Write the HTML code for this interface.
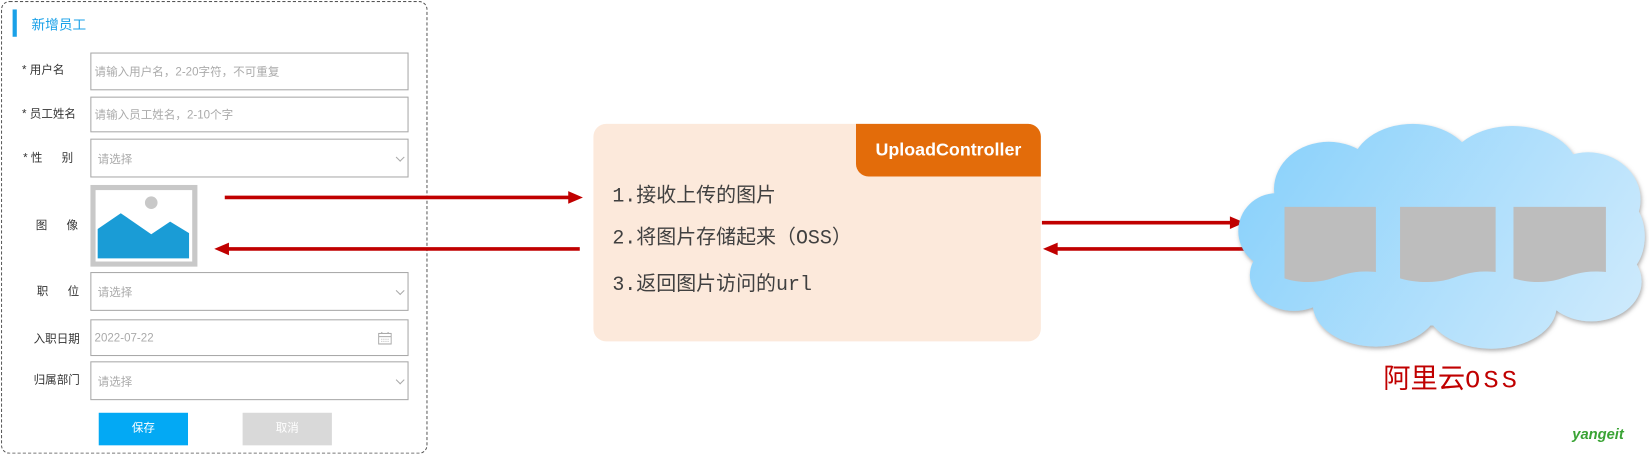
<!DOCTYPE html>
<html><head><meta charset="utf-8"><style>
html,body{margin:0;padding:0;background:#fff;width:1649px;height:456px;overflow:hidden}
#w{position:absolute;left:0;top:0;width:1570px;height:434px;transform:scale(1.0503);transform-origin:0 0;font-family:"Liberation Sans","Noto Sans CJK SC",sans-serif}
.a{position:absolute}
.lbl{position:absolute;font-size:11px;color:#333;line-height:14px}
.in{position:absolute;left:86px;width:303px;border:1px solid #a9a9a9;background:#fff;font-size:11px;color:#aaa;box-sizing:border-box}
.in span{position:absolute;left:3px;top:50%;transform:translateY(-50%)}
.chev{position:absolute;right:4px;top:50%;width:5px;height:5px;border-right:1px solid #aaa;border-bottom:1px solid #aaa;transform:translateY(-70%) rotate(45deg)}
.ln{position:absolute;left:583px;font-size:19px;color:#404040;white-space:nowrap}
.m{font-family:"Liberation Mono",monospace}
</style></head><body><div id="w">
<div class="a" style="left:1px;top:1px;width:404px;height:429px;border:1px dashed #555;border-radius:8px"></div>
<div class="a" style="left:12px;top:9px;width:4px;height:26px;background:#1aa1e8"></div>
<div class="a" style="left:30px;top:13px;font-size:13px;color:#1aa1e8">新增员工</div>

<div class="lbl" style="left:21px;top:60px">* 用户名</div>
<div class="in" style="top:50px;height:36px"><span>请输入用户名，2-20字符，不可重复</span></div>
<div class="lbl" style="left:21px;top:102px">* 员工姓名</div>
<div class="in" style="top:92px;height:34px"><span>请输入员工姓名，2-10个字</span></div>
<div class="lbl" style="left:22px;top:144px">* 性&nbsp;&nbsp;&nbsp;&nbsp;&nbsp;&nbsp;别</div>
<div class="in" style="top:132px;height:37px"><span style="left:6px">请选择</span><i class="chev"></i></div>
<div class="lbl" style="left:34px;top:208px">图&nbsp;&nbsp;&nbsp;&nbsp;&nbsp;&nbsp;像</div>
<svg class="a" style="left:86px;top:176px" width="102" height="78" viewBox="0 0 102 78">
<rect width="102" height="78" fill="#c8c8c8"/><rect x="5" y="5" width="92" height="68" fill="#fff"/>
<polygon points="7,42 29,27 58,47 76,35 94,46 94,70 7,70" fill="#1a9cd6"/>
<circle cx="58" cy="17" r="6" fill="#c8c8c8"/></svg>
<div class="lbl" style="left:35px;top:271px">职&nbsp;&nbsp;&nbsp;&nbsp;&nbsp;&nbsp;位</div>
<div class="in" style="top:259px;height:37px"><span style="left:6px">请选择</span><i class="chev"></i></div>
<div class="lbl" style="left:32px;top:316px">入职日期</div>
<div class="in" style="top:304px;height:35px"><span>2022-07-22</span>
<svg class="a" style="right:15px;top:11px" width="13" height="12" viewBox="0 0 13 12"><rect x="0.5" y="1.5" width="12" height="10" fill="none" stroke="#aaa"/><line x1="0.5" y1="4.5" x2="12.5" y2="4.5" stroke="#aaa"/><line x1="3.5" y1="0" x2="3.5" y2="2" stroke="#aaa"/><line x1="9.5" y1="0" x2="9.5" y2="2" stroke="#aaa"/><path d="M3 7h7M3 9h7" stroke="#bbb" stroke-dasharray="1 1"/></svg></div>
<div class="lbl" style="left:32px;top:355px">归属部门</div>
<div class="in" style="top:344px;height:37px"><span style="left:6px">请选择</span><i class="chev"></i></div>
<div class="a" style="left:94px;top:393px;width:85px;height:31px;background:#03a9f4;color:#fff;font-size:11px;text-align:center;line-height:31px">保存</div>
<div class="a" style="left:231px;top:393px;width:85px;height:31px;background:#d9d9d9;color:#fff;font-size:11px;text-align:center;line-height:31px">取消</div>

<svg class="a" style="left:0;top:0" width="1570" height="434">
<line x1="214" y1="188" x2="543" y2="188" stroke="#c00000" stroke-width="3.5"/><polygon points="541,182 555,188 541,194" fill="#c00000"/>
<line x1="216" y1="237" x2="552" y2="237" stroke="#c00000" stroke-width="3.5"/><polygon points="218,231 204,237 218,243" fill="#c00000"/>
<line x1="992" y1="212" x2="1173" y2="212" stroke="#c00000" stroke-width="3.5"/><polygon points="1171,206 1185,212 1171,218" fill="#c00000"/>
<line x1="1005" y1="237" x2="1186" y2="237" stroke="#c00000" stroke-width="3.5"/><polygon points="1007,231 993,237 1007,243" fill="#c00000"/>
<defs><linearGradient id="g" gradientUnits="userSpaceOnUse" x1="1230" y1="140" x2="1520" y2="330"><stop offset="0" stop-color="#8fd3fb"/><stop offset="1" stop-color="#cbe9fc"/></linearGradient>
<filter id="s" x="-10%" y="-10%" width="120%" height="130%"><feDropShadow dx="1" dy="2" stdDeviation="2" flood-color="#777" flood-opacity="0.6"/></filter></defs>
<g fill="url(#g)" filter="url(#s)">
<ellipse cx="1370" cy="230" rx="170" ry="80"/>
<ellipse cx="1265" cy="180" rx="52" ry="45"/><ellipse cx="1345" cy="160" rx="58" ry="42"/><ellipse cx="1440" cy="162" rx="62" ry="42"/><ellipse cx="1512" cy="190" rx="50" ry="45"/>
<ellipse cx="1215" cy="220" rx="36" ry="36"/><ellipse cx="1232" cy="262" rx="42" ry="34"/><ellipse cx="1310" cy="290" rx="60" ry="40"/><ellipse cx="1420" cy="292" rx="62" ry="40"/><ellipse cx="1515" cy="268" rx="48" ry="38"/><ellipse cx="1540" cy="225" rx="26" ry="38"/>
</g>
<g fill="#bdbdbd">
<path d="M1223 197h87v62c-20 -2 -30 2 -45 7c-15 4 -30 3 -42 -1z"/>
<path d="M1333 197h91v62c-20 -2 -30 2 -45 7c-15 4 -32 3 -46 -1z"/>
<path d="M1441 197h88v62c-20 -2 -30 2 -45 7c-15 4 -30 3 -43 -1z"/>
</g>
</svg>

<div class="a" style="left:565px;top:118px;width:426px;height:207px;background:#fce9db;border-radius:12px"></div>
<div class="a" style="left:815px;top:118px;width:176px;height:50px;background:#e36c0a;border-radius:0 12px 0 12px;color:#fff;font-weight:bold;font-size:17px;text-align:center;line-height:50px">UploadController</div>
<div class="ln" style="top:171px"><span class="m">1.</span>接收上传的图片</div>
<div class="ln" style="top:211px"><span class="m">2.</span>将图片存储起来（<span class="m">OSS</span>）</div>
<div class="ln" style="top:255px"><span class="m">3.</span>返回图片访问的<span class="m">url</span></div>

<div class="a" style="left:1317px;top:340px;font-size:26px;color:#c00000;white-space:nowrap">阿里云<span style="font-family:'Liberation Mono',monospace;font-size:24px;letter-spacing:3px">OSS</span></div>
<div class="a" style="left:1497px;top:405px;font-size:14px;font-weight:bold;color:#3aa335;font-style:italic">yangeit</div>
</div></body></html>
